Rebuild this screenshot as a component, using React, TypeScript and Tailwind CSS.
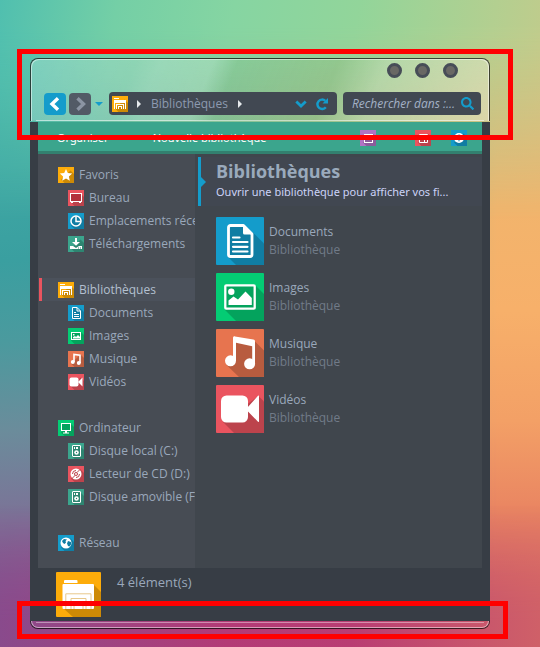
import React from "react"
import { FaSearch } from "react-icons/fa"

type IconName =
  | "star"
  | "desktop"
  | "clock"
  | "download"
  | "library"
  | "document"
  | "image"
  | "music"
  | "video"
  | "computer"
  | "disk"
  | "cd"
  | "globe"
  | "pane"
  | "preview"
  | "help"

interface TreeItem {
  label: string
  icon: IconName
}

interface TreeGroup extends TreeItem {
  selected?: boolean
  children: TreeItem[]
}

// [background, long shadow]
const TILE_COLORS: Record<IconName, [string, string]> = {
  star: ["#fdac0a", "#cd8a06"],
  desktop: ["#ea545f", "#bc434c"],
  clock: ["#149ccb", "#107da3"],
  download: ["#3ba58d", "#2e8571"],
  library: ["#fdac0a", "#cd8a06"],
  document: ["#149ccb", "#107da3"],
  image: ["#04cc74", "#04a35d"],
  music: ["#e7744f", "#b85c3f"],
  video: ["#ea545f", "#bc434c"],
  computer: ["#04cc74", "#04a35d"],
  disk: ["#3ba58d", "#2e8571"],
  cd: ["#ea545f", "#bc434c"],
  globe: ["#149ccb", "#107da3"],
  pane: ["#b073c4", "#8c5c9c"],
  preview: ["#ea545f", "#bc434c"],
  help: ["#149ccb", "#107da3"]
}

const SMALL_GLYPHS: Record<IconName, React.ReactNode> = {
  star: (
    <path d="M8 2l1.8 4 4.4.4-3.3 3 .9 4.4L8 11.500l-3.800 2.300.9-4.400L1.800 6.400 6.200 6z" fill="#fff" />
  ),
  desktop: (
    <>
      <rect x="2.5" y="3.5" width="11" height="8" fill="#b3313c" stroke="#fff" />
      <path d="M3 12.500h2M11 12.500h2" stroke="#fff" />
    </>
  ),
  clock: (
    <>
      <circle cx="8" cy="8" r="5" fill="#107da3" stroke="#fff" strokeWidth="1.5" />
      <path d="M8 3.500V8.500H12.500" fill="none" stroke="#fff" strokeWidth="1.5" />
    </>
  ),
  download: (
    <>
      <path d="M7 2h2v4h3L8 9.800 4 6h3z" fill="#fff" />
      <path d="M2 10h3l3 2 3-2h3v3H2z" fill="#fff" />
      <path d="M10 12h1M12 12h1" stroke="#2e8571" />
    </>
  ),
  library: (
    <>
      <path d="M2 2h5v1H2zM2 4h12v9h-1V7H3v6H2z" fill="#fff" />
      <path d="M2 4h12v2H2zM4 8h8v5h-1V9H5v4H4zM6 10h4v3H9v-2H7v2H6z" fill="#fff" />
    </>
  ),
  document: (
    <>
      <path d="M4.500 2.500H9L12.500 6V13.500H4.500z" fill="#107da3" stroke="#fff" />
      <path d="M9 2.500V6H12.500M6 7.500H8M6 9.500H11M6 11.500H11" fill="none" stroke="#fff" />
    </>
  ),
  image: (
    <>
      <rect x="3.5" y="4.5" width="9" height="7" fill="#04a35d" stroke="#fff" />
      <path d="M5 10.500V9l2-1 1 1 2-2 2 2v1.500zM5 6h1.500v1.500H5z" fill="#fff" />
    </>
  ),
  music: (
    <>
      <path d="M6 11V3.500l6 .8V12" fill="none" stroke="#fff" strokeWidth="1.6" />
      <circle cx="4.8" cy="11" r="2" fill="#fff" />
      <circle cx="10.8" cy="12" r="2" fill="#fff" />
    </>
  ),
  video: (
    <>
      <rect x="1.5" y="3.5" width="9" height="9" rx="2" fill="#fff" />
      <path d="M10 8L14.500 3.500v9z" fill="#fff" />
    </>
  ),
  computer: (
    <>
      <rect x="3.5" y="3.5" width="9" height="7" fill="#04a35d" stroke="#fff" />
      <path d="M7 11h2v1.500h2v1H5v-1h2z" fill="#fff" />
    </>
  ),
  disk: (
    <>
      <rect x="4.5" y="2.5" width="8" height="11" rx="0.5" fill="#2e8571" stroke="#fff" />
      <path d="M6 4h1v2H6zM8 4h2v2H8z" fill="#fff" />
      <circle cx="8.5" cy="9.5" r="2.3" fill="#fff" />
      <circle cx="8.5" cy="9.5" r="0.7" fill="#2e8571" />
    </>
  ),
  cd: (
    <>
      <circle cx="8" cy="8" r="5.5" fill="#fff" />
      <circle cx="8" cy="8" r="1.5" fill="#fff" stroke="#bc434c" />
      <path
        d="M9 6.500l3.300-3.300M7 9.500l-3.300 3.300M4.500 8A3.500 3.500 0 0 1 8 4.500M11.500 8A3.500 3.500 0 0 1 8 11.500"
        fill="none"
        stroke="#bc434c"
      />
    </>
  ),
  globe: (
    <>
      <circle cx="8" cy="8" r="5.5" fill="#fff" />
      <path
        d="M4 6l2-2 3 .5L7.500 6 8 7.500 6.500 9 5 8zM10 6l3 1v2.500l-1.500 2L10 11 9 8.500z"
        fill="#107da3"
      />
    </>
  ),
  pane: (
    <>
      <rect x="4.5" y="4.500" width="8" height="8" fill="#8c5c9c" stroke="#fff" />
      <path d="M8 4h5v6H8z" fill="#fff" />
    </>
  ),
  preview: (
    <path d="M4.500 4.500H12.500V12.500H4.500zM4 6H13M9.500 6V12" fill="none" stroke="#fff" />
  ),
  help: (
    <>
      <circle cx="8" cy="8" r="5" fill="#fff" />
      <path
        d="M6.500 6.800C6.500 4.500 9.700 4.700 9.500 6.700C9.400 7.800 8 7.800 8 9.300M8 10.300V11.300"
        fill="none"
        stroke="#107da3"
        strokeWidth="1.3"
      />
    </>
  )
}

const SmallIcon: React.FC<{ name: IconName }> = ({ name }) => {
  const [bg, shadow] = TILE_COLORS[name]
  return (
    <svg viewBox="0 0 16 16" className="size-4 shrink-0" aria-hidden="true">
      <rect width="16" height="16" fill={bg} />
      <path d="M12.500 3.500L16 7V16H6.500L3 12.500z" fill={shadow} />
      {SMALL_GLYPHS[name]}
    </svg>
  )
}

const DocumentTile = () => (
  <svg viewBox="0 0 48 48" className="size-12 shrink-0" aria-hidden="true">
    <rect width="48" height="48" rx="1" fill="#149ccb" />
    <path d="M37 15.500L48 26.500V47a1 1 0 0 1-1 1H20L12 40z" fill="#107da3" />
    <path
      d="M14.500 8.500H27.500L36 17V37.500a2 2 0 0 1-2 2H14.500a2 2 0 0 1-2-2V10.500a2 2 0 0 1 2-2z"
      fill="#107da3"
      stroke="#fff"
      strokeWidth="2.8"
      strokeLinejoin="round"
    />
    <path d="M27 8L36.500 17.500H28.500a1.500 1.500 0 0 1-1.500-1.500z" fill="#fff" />
    <path
      d="M17 20.500H23.500M17 25H31.500M17 29.800H31.500M17 34.500H31.500"
      stroke="#fff"
      strokeWidth="2.2"
      strokeLinecap="round"
    />
  </svg>
)

const ImageTile = () => (
  <svg viewBox="0 0 48 48" className="size-12 shrink-0" aria-hidden="true">
    <rect width="48" height="48" rx="1" fill="#04cc74" />
    <path d="M39 12L48 21V47a1 1 0 0 1-1 1H20L9 37z" fill="#04a35d" />
    <rect
      x="9.3"
      y="12.3"
      width="29.4"
      height="23.4"
      rx="1"
      fill="#04a35d"
      stroke="#fff"
      strokeWidth="2.3"
    />
    <circle cx="15.3" cy="18.8" r="3.2" fill="#fff" />
    <path d="M12.500 32V27.500L17.500 23.500L22 26.500L29.500 18.500L35.800 25V32z" fill="#fff" />
  </svg>
)

const MusicTile = () => (
  <svg viewBox="0 0 48 48" className="size-12 shrink-0" aria-hidden="true">
    <rect width="48" height="48" rx="1" fill="#e7744f" />
    <path d="M38.500 12L48 21.500V47a1 1 0 0 1-1 1H23L10 35.500L20 28V13z" fill="#b85c3f" />
    <path
      d="M17 32V9c0-1.200.8-1.800 2-1.600l18.300 3.200c1.200.2 1.700.8 1.700 1.900V35H36.200V17.200L20 13.800V32z"
      fill="#fff"
    />
    <circle cx="14.5" cy="31.8" r="5.5" fill="#fff" />
    <circle cx="33.6" cy="34.8" r="5.5" fill="#fff" />
  </svg>
)

const VideoTile = () => (
  <svg viewBox="0 0 48 48" className="size-12 shrink-0" aria-hidden="true">
    <rect width="48" height="48" rx="1" fill="#ea545f" />
    <path d="M42.500 11L48 16.500V47a1 1 0 0 1-1 1H18L7 37z" fill="#bc434c" />
    <rect x="5" y="10.5" width="27" height="27" rx="5.5" fill="#fff" />
    <path
      d="M31.500 22.500L42 10.800c.5-.5 1-.3 1 .4V36.300c0 .7-.5 1-1 .4L31.500 26z"
      fill="#fff"
    />
  </svg>
)

const LibraryTile = () => (
  <svg viewBox="0 0 45 45" className="size-[45px] shrink-0" aria-hidden="true">
    <rect width="45" height="45" rx="1" fill="#fdac0a" />
    <path d="M37 12L45 20V44a1 1 0 0 1-1 1H17L7 36z" fill="#cd8a06" />
    <path d="M8 9a1 1 0 0 1 1-1H20.500a1 1 0 0 1 1 1V11H8z" fill="#fff" />
    <path
      d="M6.500 13a1 1 0 0 1 1-1H37a1 1 0 0 1 1 1V36a1 1 0 0 1-1 1H7.500a1 1 0 0 1-1-1z"
      fill="#fff"
    />
    <path
      d="M9.800 37V21.800H35V37M15 37V26.500H30V37M18 37V30H27V37"
      fill="none"
      stroke="#e8c88a"
      strokeWidth="1"
    />
  </svg>
)

const TREE: TreeGroup[] = [
  {
    label: "Favoris",
    icon: "star",
    children: [
      { label: "Bureau", icon: "desktop" },
      { label: "Emplacements récents", icon: "clock" },
      { label: "Téléchargements", icon: "download" }
    ]
  },
  {
    label: "Bibliothèques",
    icon: "library",
    selected: true,
    children: [
      { label: "Documents", icon: "document" },
      { label: "Images", icon: "image" },
      { label: "Musique", icon: "music" },
      { label: "Vidéos", icon: "video" }
    ]
  },
  {
    label: "Ordinateur",
    icon: "computer",
    children: [
      { label: "Disque local (C:)", icon: "disk" },
      { label: "Lecteur de CD (D:)", icon: "cd" },
      { label: "Disque amovible (F:)", icon: "disk" }
    ]
  },
  { label: "Réseau", icon: "globe", children: [] }
]

const LIBRARIES = [
  { label: "Documents", Tile: DocumentTile },
  { label: "Images", Tile: ImageTile },
  { label: "Musique", Tile: MusicTile },
  { label: "Vidéos", Tile: VideoTile }
]

const Wallpaper = () => (
  <div className="absolute inset-0 overflow-hidden" aria-hidden="true">
    <div className="absolute inset-0 bg-[linear-gradient(176deg,#50bfaf_0%,#41aca6_18%,#3a9fa0_38%,#4b9a9e_50%,#6b8c9b_63%,#7c7297_76%,#86558f_88%,#894a8c_100%)]" />
    <div className="absolute inset-0 bg-[linear-gradient(180deg,#d6c785_0%,#e2b978_14%,#f2b46c_32%,#f7b06a_48%,#f3a066_65%,#ea8762_78%,#db6d64_90%,#cb5c6a_100%)] [mask-image:linear-gradient(90deg,transparent_5%,black_92%)]" />
    <div className="absolute inset-0 bg-[linear-gradient(100deg,#50bfaf_0%,#74cfa6_18%,#86d5a2_36%,#92d59a_55%,#b3cf90_76%,#d9c584_100%)] [mask-image:linear-gradient(180deg,black_0%,black_4%,transparent_34%)]" />
    <div className="absolute inset-0 bg-[linear-gradient(90deg,#894a8c_0%,#9c4482_18%,#b33a76_42%,#b93d73_65%,#c6526d_85%,#cf6068_100%)] [mask-image:linear-gradient(0deg,black_0%,black_4%,transparent_22%)]" />
  </div>
)

const RightCaret = () => (
  <svg viewBox="0 0 4 8" className="h-2 w-1 shrink-0" aria-hidden="true">
    <path d="M0 0L4 4L0 8z" fill="#e6e9ec" />
  </svg>
)

const MenuCaret = () => (
  <svg viewBox="0 0 6 3" className="h-[3px] w-[6px]" aria-hidden="true">
    <path d="M0 0H6L3 3z" fill="#fff" />
  </svg>
)

const TitleBar = () => (
  <header className="rounded-t-lg border border-b-0 border-black/70 bg-[linear-gradient(112deg,rgba(255,255,255,.22)_0%,rgba(255,255,255,.18)_22%,rgba(255,255,255,.24)_27%,rgba(255,255,255,.2)_38%,rgba(130,160,100,.12)_43%,rgba(130,160,100,.18)_64%,rgba(255,255,255,.2)_74%,rgba(255,255,255,.3)_100%)]">
    <div className="rounded-t-lg border border-b-0 border-white/50">
      <div className="flex justify-end gap-[13px] pt-[3px] pr-[30px]">
        {["Réduire", "Agrandir", "Fermer"].map((label) => (
          <button
            key={label}
            aria-label={label}
            className="size-[15px] rounded-full border-[3px] border-[#474d57] bg-[#696864]"
          />
        ))}
      </div>
      <div className="mt-[14px] flex items-center pr-[7px] pb-[5px] pl-[12px]">
        <button
          aria-label="Précédent"
          className="flex size-[22px] items-center justify-center rounded-sm bg-[#149ccb] text-white">
          <svg viewBox="0 0 14 14" className="size-[14px]" aria-hidden="true">
            <path d="M10 1.300L4 7L10 12.700" fill="none" stroke="currentColor" strokeWidth="3.4" />
          </svg>
        </button>
        <button
          aria-label="Suivant"
          className="ml-[3px] flex size-[22px] items-center justify-center rounded-sm bg-[#525a66] text-[#8b94a3]">
          <svg viewBox="0 0 14 14" className="size-[14px]" aria-hidden="true">
            <path d="M4.500 1.300L10.500 7L4.500 12.700" fill="none" stroke="currentColor" strokeWidth="3.4" />
          </svg>
        </button>
        <button aria-label="Historique" className="ml-1 flex h-[22px] w-2 items-center">
          <svg viewBox="0 0 8 4" className="h-1 w-2" aria-hidden="true">
            <path d="M0 0H8L4 4z" fill="#149ccb" />
          </svg>
        </button>
        <div className="ml-[6px] flex h-[23px] min-w-0 flex-1 items-center rounded-sm bg-[#414852] pr-2 pl-[3px]">
          <SmallIcon name="library" />
          <span className="w-[9px]" />
          <RightCaret />
          <a href="#" className="mx-[10px] text-[#8d9ab0]">
            Bibliothèques
          </a>
          <RightCaret />
          <div className="ml-auto flex items-center gap-2 text-[#149ccb]">
            <button aria-label="Emplacements précédents">
              <svg viewBox="0 0 12 8" className="h-2 w-3" aria-hidden="true">
                <path d="M1.300 1.500L6 6L10.700 1.500" fill="none" stroke="currentColor" strokeWidth="2.8" />
              </svg>
            </button>
            <button aria-label="Actualiser">
              <svg viewBox="0 0 14 14" className="size-[14px]" aria-hidden="true">
                <path
                  d="M10.800 10.200A4.700 4.700 0 1 1 10.300 3.800"
                  fill="none"
                  stroke="currentColor"
                  strokeWidth="2.4"
                />
                <path d="M13 1V6.500H7.500z" fill="currentColor" />
              </svg>
            </button>
          </div>
        </div>
        <label className="ml-[6px] flex h-[23px] w-[138px] items-center rounded-sm bg-[#414852] pr-[7px] pl-[9px]">
          <input
            type="text"
            aria-label="Rechercher"
            placeholder="Rechercher dans :..."
            className="min-w-0 flex-1 bg-transparent italic outline-none placeholder:text-[#a3b1c6]"
          />
          <FaSearch size={13} className="shrink-0 text-[#149ccb]" />
        </label>
      </div>
      <div className="mx-1 mb-px h-px bg-white/50" />
    </div>
  </header>
)

const Toolbar = () => (
  <div className="flex h-8 items-center border-b-[3px] border-[#33806f] bg-[#3ba58d] pt-[2px] pr-[15px] pl-[19px] font-['Noto_Sans',sans-serif] text-[11px] text-white">
    <button className="flex items-center gap-[6px]">
      Organiser
      <MenuCaret />
    </button>
    <button className="ml-8">Nouvelle bibliothèque</button>
    <div className="ml-auto flex items-center">
      <button aria-label="Affichage" className="flex items-center gap-[10px]">
        <SmallIcon name="pane" />
        <MenuCaret />
      </button>
      <button aria-label="Volet de visualisation" className="ml-[23px]">
        <SmallIcon name="preview" />
      </button>
      <button aria-label="Aide" className="ml-5">
        <SmallIcon name="help" />
      </button>
    </div>
  </div>
)

const Sidebar = () => (
  <nav className="w-[157px] shrink-0 overflow-hidden bg-[#474c54] pt-[9px] pb-[14px] whitespace-nowrap text-[#9aa8bb]">
    <ul className="flex flex-col gap-[23px]">
      {TREE.map((group) => (
        <li key={group.label}>
          <a
            href="#"
            className={`ml-px flex h-[23px] items-center gap-[5px] border-l-[3px] pl-4 ${
              group.selected
                ? "border-[#ea545f] bg-[#4b515b] text-[#b4c0d0]"
                : "border-transparent"
            }`}>
            <SmallIcon name={group.icon} />
            {group.label}
          </a>
          {group.children.length > 0 && (
            <ul>
              {group.children.map((item) => (
                <li key={item.label}>
                  <a href="#" className="flex h-[23px] items-center gap-[5px] pl-[30px]">
                    <SmallIcon name={item.icon} />
                    {item.label}
                  </a>
                </li>
              ))}
            </ul>
          )}
        </li>
      ))}
    </ul>
  </nav>
)

const LibraryView = () => (
  <main className="min-w-0 flex-1 bg-[#40464d] pt-[3px] pl-[3px]">
    <div className="relative h-[49px] border-l-[3px] border-[#149ccb] bg-[#414751] pl-[15px]">
      <svg
        viewBox="0 0 5 10"
        className="absolute top-5 left-0 h-[10px] w-[5px]"
        aria-hidden="true">
        <path d="M0 0L5 5L0 10z" fill="#149ccb" />
      </svg>
      <h1 className="pt-[2px] text-[18px] leading-[25px] font-bold text-[#9aaabc]">
        Bibliothèques
      </h1>
      <p className="truncate font-['Noto_Sans',sans-serif] text-[11px] leading-[16px] text-[#ccd3f8]">
        Ouvrir une bibliothèque pour afficher vos fi...
      </p>
    </div>
    <ul className="mt-[11px] flex flex-col gap-2 pl-[18px]">
      {LIBRARIES.map(({ label, Tile }) => (
        <li key={label} className="flex items-center gap-[5px]">
          <Tile />
          <div className="leading-[18px]">
            <div className="text-[#9aa8bb]">{label}</div>
            <div className="text-[#717b88]">Bibliothèque</div>
          </div>
        </li>
      ))}
    </ul>
  </main>
)

const App: React.FC = () => {
  return (
    <div className="relative min-h-screen pt-[58px] pr-[50px] pb-[18px] pl-[30px] font-['Open_Sans',sans-serif] text-[12px] leading-[16px]">
      <Wallpaper />
      <div className="relative">
        <TitleBar />
        <div className="bg-[#373d45] px-2">
          <Toolbar />
          <div className="flex">
            <Sidebar />
            <LibraryView />
          </div>
          <footer className="flex h-[53px] gap-4 pt-1 pl-[18px]">
            <LibraryTile />
            <p className="pt-[2px] text-[13px] text-[#9aa8bb]">4 élément(s)</p>
          </footer>
        </div>
        <div className="rounded-b-lg border border-t-0 border-black/70">
          <div className="h-[7px] rounded-b-lg border border-t-0 border-white/50 px-1 pt-px">
            <div className="h-px bg-white/40" />
          </div>
        </div>

        {/* highlight frames around the glass areas */}
        <div className="pointer-events-none absolute -top-[9px] -right-[23px] -left-[13px] h-[91px] border-[5px] border-[#ff0000]" />
        <div className="pointer-events-none absolute -right-[18px] -bottom-[10px] -left-[13px] h-[38px] border-[5px] border-[#ff0000]" />
      </div>
    </div>
  )
}

export default App
